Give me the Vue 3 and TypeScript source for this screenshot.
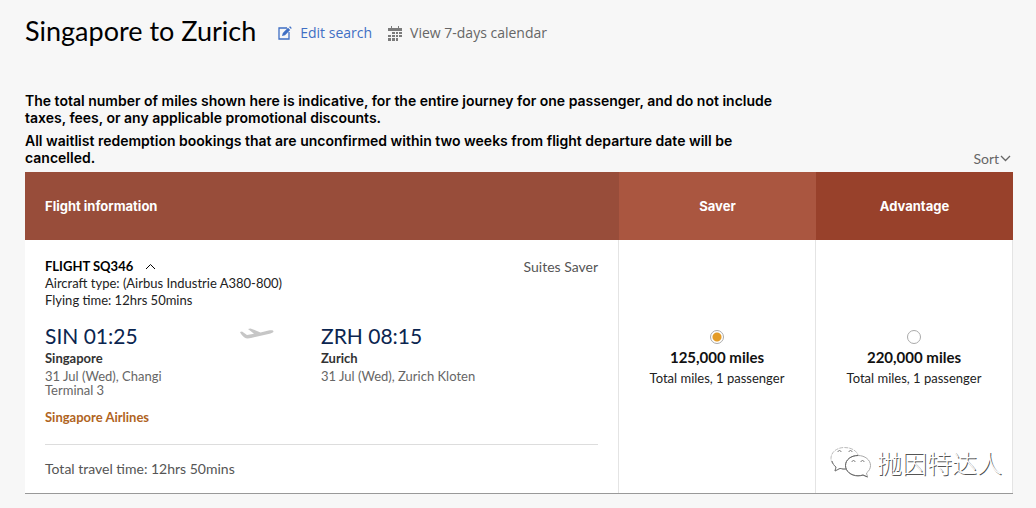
<script setup lang="ts">
import { ref } from 'vue'

interface Fare {
  id: string
  name: string
  miles: string
}

const fares: Fare[] = [
  { id: 'saver', name: 'Saver', miles: '125,000 miles' },
  { id: 'advantage', name: 'Advantage', miles: '220,000 miles' },
]

const selected = ref('saver')
const expanded = ref(true)
</script>

<template>
  <main class="page">
    <header class="heading">
      <h1>Singapore to Zurich</h1>
      <a href="#edit" class="tool edit">
        <svg width="14" height="14" viewBox="0 0 14 14" fill="none" stroke="currentColor" aria-hidden="true">
          <path d="M9 2H1v11h10V6" stroke-width="1.3" />
          <path d="M4 10l.8-3L10 1.8 12.200 4 7 9.200z" fill="currentColor" stroke="none" />
          <path d="M11 1l2 2 .7-1L12.200.3z" fill="currentColor" stroke="none" />
        </svg>
        Edit search
      </a>
      <a href="#calendar" class="tool">
        <svg width="14" height="15" viewBox="0 0 14 15" fill="currentColor" opacity="0.85" aria-hidden="true">
          <path d="M0 2h14v3H0zM3 0h1v3H3zM10 0h1v3h-1z" />
          <path d="M4 6h3v2H4zM8 6h2v2H8zM11 6h3v2h-3zM0 9h3v2H0zM4 9h3v2H4zM8 9h2v2H8zM11 9h3v2h-3zM0 12h3v3H0zM4 12h3v3H4zM8 12h2v3H8z" />
        </svg>
        View 7-days calendar
      </a>
    </header>

    <div class="intro">
      <div class="notes">
        <p>The total number of miles shown here is indicative, for the entire journey for one passenger, and do not include taxes, fees, or any applicable promotional discounts.</p>
        <p>All waitlist redemption bookings that are unconfirmed within two weeks from flight departure date will be cancelled.</p>
      </div>
      <button type="button" class="sort">
        Sort
        <svg width="11" height="7" viewBox="0 0 11 7" fill="none" stroke="currentColor" stroke-width="1.3" aria-hidden="true">
          <path d="M1 1l4.500 4.500L10 1" />
        </svg>
      </button>
    </div>

    <div class="results">
      <table>
        <thead>
          <tr>
            <th scope="col" class="info-head">Flight information</th>
            <th v-for="fare in fares" :key="fare.id" scope="col" :class="['fare-head', fare.id]">{{ fare.name }}</th>
          </tr>
        </thead>
        <tbody>
          <tr>
            <td class="info">
              <div class="flight-top">
                <button type="button" class="flight" :aria-expanded="expanded" @click="expanded = !expanded">
                  FLIGHT SQ346
                  <svg width="11" height="7" viewBox="0 0 11 7" fill="none" stroke="currentColor" aria-hidden="true">
                    <path d="M1 6l4.500-4.500L10 6" />
                  </svg>
                </button>
                <span class="class-name">Suites Saver</span>
              </div>
              <div v-if="expanded" class="details">
                <p>Aircraft type: (Airbus Industrie A380-800)</p>
                <p>Flying time: 12hrs 50mins</p>
              </div>
              <div class="route">
                <div class="stop">
                  <p class="time">SIN 01:25</p>
                  <p class="city">Singapore</p>
                  <p>31 Jul (Wed), Changi</p>
                  <p>Terminal 3</p>
                </div>
                <svg class="plane" width="36" height="14" viewBox="0 0 36 14" fill="#c6c6c6" aria-hidden="true">
                  <path d="M1 5l2-.6L8 8l7-1.300L9 2l2.500-.6 10 4 8-1.800c3-.6 5-.3 5 .8 0 1-2 1.800-5 2.500L12 11c-3 .7-5 .6-6.500-.5C4 9.500 2 7.500 1 5z" />
                </svg>
                <div class="stop">
                  <p class="time">ZRH 08:15</p>
                  <p class="city">Zurich</p>
                  <p>31 Jul (Wed), Zurich Kloten</p>
                </div>
              </div>
              <p class="airline">Singapore Airlines</p>
              <p class="total">Total travel time: 12hrs 50mins</p>
            </td>
            <td v-for="fare in fares" :key="fare.id" class="fare">
              <label>
                <input v-model="selected" type="radio" name="fare" :value="fare.id">
                <strong>{{ fare.miles }}</strong>
                <span>Total miles, 1 passenger</span>
              </label>
            </td>
          </tr>
        </tbody>
      </table>
      <div class="watermark">
        <svg width="42" height="32" viewBox="0 0 42 32" fill="#fff" aria-hidden="true">
          <path d="M16 23c-2 .3-4 0-6-.6L5 25l1-4C3 19 1 16 1 12.500 1 6 7 1.500 14.500 1.500S28 5.500 28.500 11" stroke="#bbb" stroke-dasharray="4 1" />
          <path d="M2 15c1 3 2 4.500 4 6l-1 4 5-2.600c2 .6 4 .9 6 .6" fill="none" stroke="#777" />
          <path d="M28 9.500c7 0 12.500 4.500 12.500 10 0 3-1.500 5.500-4 7.500l1 4-4.500-2c-1.500.5-3 .8-5 .8-7 0-12.500-4.500-12.500-10.300S21 9.500 28 9.500z" stroke="#aaa" />
          <path d="M28 9.500c-7 0-12.500 4.200-12.500 10 0 5.800 5.500 10.300 12.500 10.300 2 0 3.500-.3 5-.8l4.500 2" fill="none" stroke="#666" />
          <path d="M8 6c0-2 3-2 3 0M19 6c0-2 3-2 3 0M22 16c0-2 3-2 3 0M31 16c0-2 3-2 3 0" fill="none" stroke="#777" />
        </svg>
        <span>抛因特达人</span>
      </div>
    </div>
  </main>
</template>

<style>
body {
  margin: 0;
  background: #f7f7f7;
}
</style>

<style scoped>
.page {
  padding: 11px 23px 14px 25px;
  font: 13px/17px Lato, "Liberation Sans", sans-serif;
  color: #222;
}

h1,
p {
  margin: 0;
}

button {
  padding: 0;
  border: 0;
  background: none;
  font: inherit;
  color: inherit;
  cursor: pointer;
}

.heading {
  display: flex;
  align-items: center;
  height: 40px;
}

h1 {
  margin-right: 22px;
  font: 400 27px/40px Lato, "Liberation Sans", sans-serif;
  color: #000;
}

.tool {
  display: flex;
  align-items: center;
  gap: 8px;
  margin: 4px 16px 0 0;
  font: 14px/20px "Open Sans", sans-serif;
  color: #666;
  text-decoration: none;
}

.edit {
  color: #3f6fc4;
}

.intro {
  display: flex;
  justify-content: space-between;
  align-items: flex-end;
  margin-top: 41px;
}

.notes {
  max-width: 770px;
  font: 600 14px/17px Inter, sans-serif;
  color: #000;
}

.notes p {
  margin-bottom: 6px;
}

.sort {
  display: flex;
  align-items: center;
  gap: 1px;
  margin: 0 2px 5px 0;
  font-size: 14px;
  color: #666;
}

.results {
  position: relative;
}

table {
  width: 100%;
  table-layout: fixed;
  border-collapse: separate;
  border-spacing: 0;
  background: #fff;
  border-bottom: 1px solid #999;
}

th {
  height: 68px;
  padding: 0;
  font: 700 13px/18px Inter, sans-serif;
  color: #fff;
}

.info-head {
  padding-left: 20px;
  text-align: left;
  background: #984d3a;
}

.fare-head {
  width: 197px;
}

.saver {
  background: #aa5640;
}

.advantage {
  background: #98412b;
}

td {
  padding: 0;
  border-right: 1px solid #e4e4e4;
}

.info {
  padding: 16px 20px;
  vertical-align: top;
}

.flight-top {
  display: flex;
  justify-content: space-between;
  align-items: flex-end;
  height: 19px;
}

.flight {
  display: flex;
  align-items: center;
  gap: 12px;
  font-weight: 700;
  color: #000;
}

.class-name {
  font-size: 14px;
  color: #555;
}

.route {
  display: flex;
  align-items: flex-start;
  margin-top: 14px;
  line-height: 14px;
  color: #666;
}

.stop {
  width: 194px;
}

.time {
  font-size: 21px;
  line-height: 25px;
  color: #0b2550;
}

.city {
  margin: 2px 0 3px;
  line-height: 16px;
  font-weight: 700;
  color: #333;
}

.plane {
  margin: 4px 46px 0 0;
}

.airline {
  margin-top: 12px;
  font-weight: 700;
  color: #b0641e;
}

.total {
  margin-top: 18px;
  padding-top: 15px;
  border-top: 1px solid #ddd;
  font-size: 14px;
  color: #555;
}

.fare {
  padding-bottom: 16px;
}

.fare label {
  display: flex;
  flex-direction: column;
  align-items: center;
}

.fare input {
  appearance: none;
  width: 14px;
  height: 14px;
  margin: 0;
  border: 1px solid #aaa;
  border-radius: 50%;
  background: #fff;
}

.fare input:checked {
  background: radial-gradient(circle, #e49c28 0 4px, #fff 5px);
}

.fare strong {
  margin: 4px 0;
  font-size: 15px;
  line-height: 18px;
  color: #111;
}

.watermark {
  position: absolute;
  right: 11px;
  bottom: 15px;
  display: flex;
  align-items: center;
  gap: 5px;
  font: 300 25px/34px "Noto Sans CJK SC", sans-serif;
  color: #fff;
  text-shadow: 1px 1px 0 #555;
}
</style>
